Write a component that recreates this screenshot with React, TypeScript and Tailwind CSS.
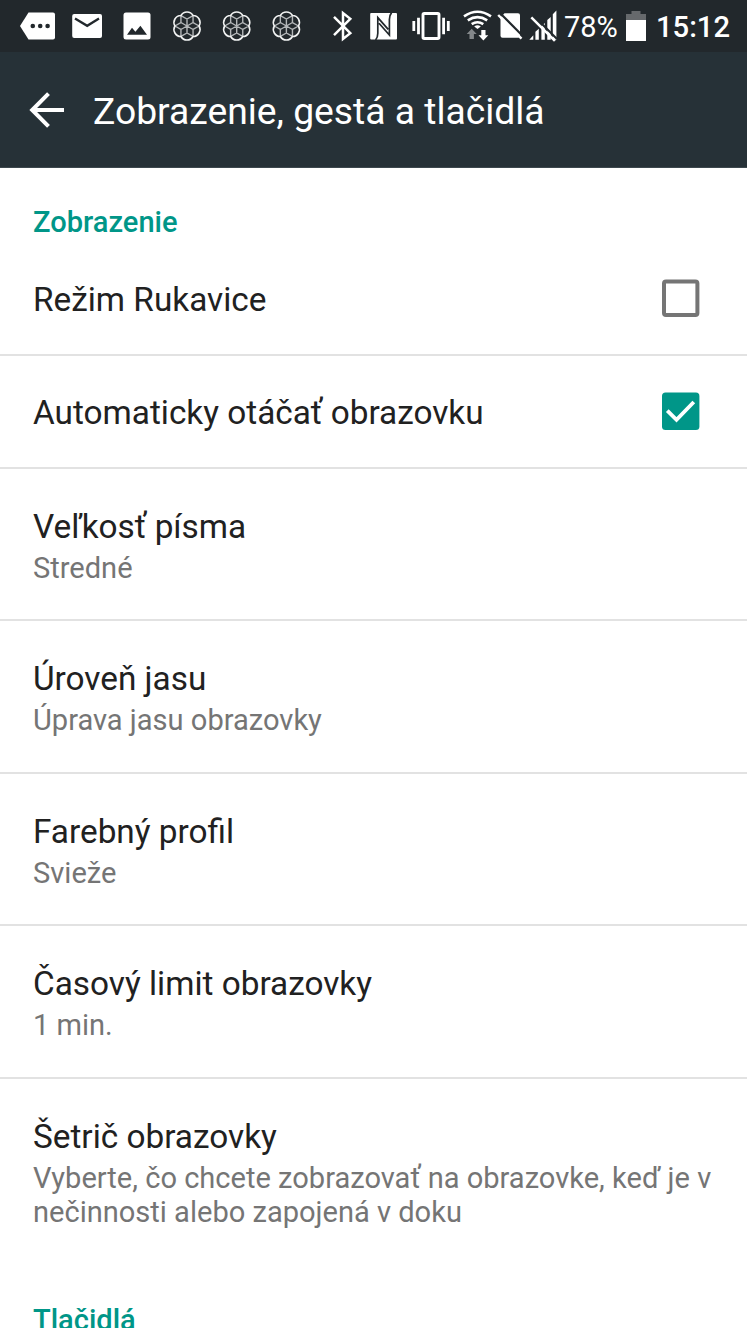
import React from 'react';

interface SettingItem {
  title: string;
  summary?: string;
  checked?: boolean;
  height: string;
}

const items: SettingItem[] = [
  { title: 'Režim Rukavice', checked: false, height: 'h-[113px]' },
  { title: 'Automaticky otáčať obrazovku', checked: true, height: 'h-[113px]' },
  { title: 'Veľkosť písma', summary: 'Stredné', height: 'h-[152px]' },
  { title: 'Úroveň jasu', summary: 'Úprava jasu obrazovky', height: 'h-[153px]' },
  { title: 'Farebný profil', summary: 'Svieže', height: 'h-[152px]' },
  { title: 'Časový limit obrazovky', summary: '1 min.', height: 'h-[153px]' },
  {
    title: 'Šetrič obrazovky',
    summary: 'Vyberte, čo chcete zobrazovať na obrazovke, keď je v nečinnosti alebo zapojená v doku',
    height: 'h-[187px]',
  },
];

interface GlyphProps {
  x: number;
  width: number;
  children: React.ReactNode;
}

// One slot of the status bar, drawn in the bar's own coordinates
const Glyph: React.FC<GlyphProps> = ({ x, width, children }) => (
  <svg width={width} height={52} viewBox={`${x} 0 ${width} 52`} fill="none" className="shrink-0">
    {children}
  </svg>
);

const point = (r: number, deg: number) => {
  const a = (deg * Math.PI) / 180;
  return `${(r * Math.cos(a)).toFixed(2)} ${(r * Math.sin(a)).toFixed(2)}`;
};

const Flower: React.FC<{ cx: number }> = ({ cx }) => {
  const tips = [0, 60, 120, 180, 240, 300];
  const outline = tips.map((d) => `A7 7 0 0 1 ${point(12.1, d + 60)}`).join('');
  const inner = tips
    .map((d) => `M0 0L${point(7, d + 30)}M${point(12.1, d)}L${point(7, d + 30)}L${point(12.1, d + 60)}`)
    .join('');
  return (
    <g transform={`translate(${cx} 26)`}>
      <path d={inner} stroke="#b4b7b9" strokeWidth="1.4" />
      <path d={`M${point(12.1, 0)}${outline}Z`} stroke="#f2f3f3" strokeWidth="1.6" />
    </g>
  );
};

const StatusBar = () => (
  <div className="flex h-[52px] items-center bg-[#22282c] text-white">
    <Glyph x={0} width={64}>
      <path d="M28.5 12.5H53a2 2 0 0 1 2 2v23a2 2 0 0 1-2 2H28.5L20 26Z" fill="#fff" />
      <circle cx="32.8" cy="26" r="2.3" fill="#22282c" />
      <circle cx="40.2" cy="26" r="2.3" fill="#22282c" />
      <circle cx="47.6" cy="26" r="2.3" fill="#22282c" />
    </Glyph>
    <Glyph x={64} width={48}>
      <rect x="72.2" y="14" width="29.8" height="24" rx="2" fill="#fff" />
      <path d="M75 18.5l12.2 7.3L99 18.5" stroke="#22282c" strokeWidth="2.3" />
    </Glyph>
    <Glyph x={112} width={50}>
      <rect x="123.5" y="12.5" width="27" height="27" rx="2.5" fill="#fff" />
      <path d="M127 34.8l5-7 3.4 4 5-6 6.6 9Z" fill="#22282c" />
    </Glyph>
    <Glyph x={162} width={150}>
      <Flower cx={187} />
      <Flower cx={236.7} />
      <Flower cx={286.4} />
    </Glyph>
    <Glyph x={312} width={50}>
      <path d="M334 16.8L350.3 33.2L343 39V13L350.3 18.8L334 35.2" stroke="#fff" strokeWidth="2.5" />
    </Glyph>
    <Glyph x={362} width={44}>
      <rect x="370.2" y="13" width="26.8" height="26.6" rx="1" fill="#fff" />
      <path
        d="M375.6 40q2.2-2.6 2.2-6.8V17.6l10.4 11.8M391.6 12.6q-2.2 2.6-2.2 6.8v15.6l-10.4-11.8"
        stroke="#22282c"
        strokeWidth="1.7"
      />
    </Glyph>
    <Glyph x={406} width={52}>
      <rect x="423" y="13.5" width="16" height="25" rx="1.2" stroke="#fff" strokeWidth="2.9" />
      <path d="M413.8 21v10M448.3 21v10" stroke="#fff" strokeWidth="2.8" />
      <path d="M418.5 17.8v16.4M443.6 17.8v16.4" stroke="#fff" strokeWidth="2.8" />
    </Glyph>
    <Glyph x={458} width={37}>
      <path
        d="M464 16.4Q477.5 7.2 491 16.4M467.8 20.3Q477.5 14 487.2 20.3M471.7 24.2Q477.5 20.4 483.3 24.2"
        stroke="#fff"
        strokeWidth="2.6"
      />
      <path d="M474.2 26.4q3.3-2.2 6.6 0l-3.3 2.6Z" fill="#fff" />
      <path d="M471.7 28.8l5 5.2h-2.8v5h-4.4v-5h-2.8Z" fill="#83878a" />
      <path d="M483.4 40.5l-4.9-5.2h2.8V30h4.2v5.3h2.8Z" fill="#fff" />
    </Glyph>
    <Glyph x={495} width={31}>
      <path d="M504.5 13.3H518a2 2 0 0 1 2 2v20.4a2 2 0 0 1-2 2h-15.5a2 2 0 0 1-2-2V17.5Z" fill="#fff" />
      <path d="M500 13l22.5 22.8" stroke="#22282c" strokeWidth="2.2" />
      <path d="M498.2 15l23.3 23.6" stroke="#fff" strokeWidth="2.4" />
    </Glyph>
    <Glyph x={526} width={38}>
      <path
        d="M529.3 39.7l4-4.5v4.5ZM535.4 39.7v-8l3.4-3v11ZM541.4 39.7V26l3.4-3v16.7ZM547.3 39.7V20l3.4-3v22.7ZM552.8 39.7V14.2l3.6-3.8v29.3Z"
        fill="#fff"
      />
      <path d="M533 15l24 24" stroke="#22282c" strokeWidth="2.2" />
      <path d="M531.3 17.3l23.6 23.5" stroke="#fff" strokeWidth="2.5" />
    </Glyph>
    <span className="w-[58px] shrink-0 whitespace-nowrap pt-[2px] text-[29px] leading-[34px]">78%</span>
    <Glyph x={622} width={34}>
      <path d="M631.5 11h9v3h5.5v6h-20v-6h5.5Z" fill="#66696c" />
      <path d="M626 20h20v21h-20Z" fill="#fff" />
    </Glyph>
    <span className="shrink-0 whitespace-nowrap pt-[2px] text-[29.2px] font-medium leading-[34px]">15:12</span>
  </div>
);

const Header = () => (
  <div className="flex h-[116px] items-center border-b border-[#3d484e] bg-[#263137] text-white">
    <svg width="93" height="116" viewBox="0 52 93 116" fill="none" className="shrink-0">
      <path d="M64 110H32.5M48.5 93.7L32.2 110l16.3 16.3" stroke="#fff" strokeWidth="4" />
    </svg>
    <h1 className="whitespace-nowrap pt-[3px] text-[37.25px] leading-[44px]">Zobrazenie, gestá a tlačidlá</h1>
  </div>
);

const Checkbox: React.FC<{ checked: boolean }> = ({ checked }) => (
  <svg width="38" height="39" viewBox="0 -0.6 38 39" fill="none" className="shrink-0">
    {checked ? (
      <>
        <rect x="0" y="0" width="37.4" height="37.4" rx="3.5" fill="#009688" />
        <path d="M5.3 18l9.2 9.2L31.8 9.4" stroke="#fff" strokeWidth="3.8" />
      </>
    ) : (
      <rect x="2" y="2" width="33.4" height="33.4" rx="2" stroke="#757575" strokeWidth="4" />
    )}
  </svg>
);

const Category: React.FC<{ children: React.ReactNode }> = ({ children }) => (
  <h2 className="text-[29.05px] font-medium leading-[34px] text-[#009688]">{children}</h2>
);

const Row: React.FC<{ item: SettingItem; last: boolean }> = ({ item, last }) => {
  let offset = item.summary ? 'pt-[3px]' : 'pt-[2px]';
  if (last) {
    offset = '';
  }

  return (
    <li
      className={`flex items-center justify-between pl-[33px] ${item.summary ? 'pr-[30px]' : 'pr-[47px]'} ${item.height} ${
        last ? '' : 'border-b-2 border-[#e2e2e2]'
      }`}
    >
      <div className={offset}>
        <div className="text-[33.35px] leading-[39px] text-[#212121]">{item.title}</div>
        {item.summary && (
          <div className="pt-[5px] text-[29.05px] leading-[34px] text-[#757575]">{item.summary}</div>
        )}
      </div>
      {item.checked !== undefined && <Checkbox checked={item.checked} />}
    </li>
  );
};

export default function App() {
  return (
    <div className="h-[1328px] w-[747px] overflow-hidden bg-white font-[Roboto,sans-serif]">
      <StatusBar />
      <Header />
      <div className="flex h-[75px] items-end pb-[4px] pl-[33px]">
        <Category>Zobrazenie</Category>
      </div>
      <ul>
        {items.map((item, i) => (
          <Row key={item.title} item={item} last={i === items.length - 1} />
        ))}
      </ul>
      <div className="pl-[33px] pt-[37px]">
        <Category>Tlačidlá</Category>
      </div>
    </div>
  );
}
